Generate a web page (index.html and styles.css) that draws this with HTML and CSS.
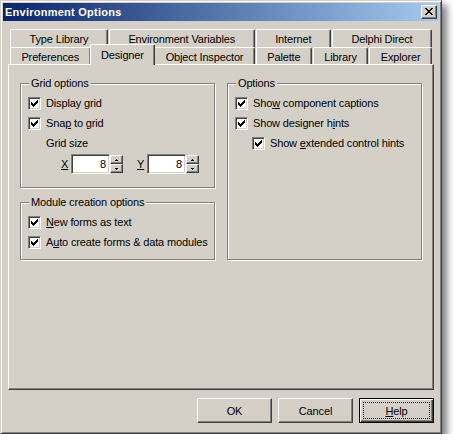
FILE: index.html
```html
<!DOCTYPE html>
<html>
<head>
<meta charset="utf-8">
<title>Environment Options</title>
<link rel="stylesheet" href="styles.css">
</head>
<body>
<div class="window">
  <div class="titlebar">
    <span class="title">Environment Options</span>
    <div class="close">
      <svg width="8" height="7" viewBox="0 0 8 7" shape-rendering="crispEdges"><path d="M0 0h2v1h-2zM6 0h2v1h-2zM1 1h2v1h-2zM5 1h2v1h-2zM2 2h4v1h-4zM3 3h2v1h-2zM2 4h4v1h-4zM1 5h2v1h-2zM5 5h2v1h-2zM0 6h2v1h-2zM6 6h2v1h-2z" fill="#000"/></svg>
    </div>
  </div>

  <div class="client">
    <div class="tabs">
      <div class="tab-row back">
        <div class="tab">Type Library</div>
        <div class="tab">Environment Variables</div>
        <div class="tab">Internet</div>
        <div class="tab">Delphi Direct</div>
      </div>
      <div class="tab-row front">
        <div class="tab">Preferences</div>
        <div class="tab selected">Designer</div>
        <div class="tab">Object Inspector</div>
        <div class="tab">Palette</div>
        <div class="tab">Library</div>
        <div class="tab">Explorer</div>
      </div>
    </div>

    <div class="page">
      <div class="column">
        <div class="group grid-group">
          <span class="group-label">Grid options</span>
          <div class="check-row">
            <span class="cb"><svg width="7" height="7" viewBox="0 0 7 7" shape-rendering="crispEdges"><path d="M6 0h1v1h-1zM5 1h2v1h-2zM0 2h1v1h-1zM4 2h3v1h-3zM0 3h2v1h-2zM3 3h3v1h-3zM0 4h5v1h-5zM1 5h3v1h-3zM2 6h1v1h-1z" fill="#000"/></svg></span>
            <span>Display <u>g</u>rid</span>
          </div>
          <div class="check-row">
            <span class="cb"><svg width="7" height="7" viewBox="0 0 7 7" shape-rendering="crispEdges"><path d="M6 0h1v1h-1zM5 1h2v1h-2zM0 2h1v1h-1zM4 2h3v1h-3zM0 3h2v1h-2zM3 3h3v1h-3zM0 4h5v1h-5zM1 5h3v1h-3zM2 6h1v1h-1z" fill="#000"/></svg></span>
            <span>Sna<u>p</u> to grid</span>
          </div>
          <div class="text-row">Grid size</div>
          <div class="spin-row">
            <div class="spin-field">
              <span class="axis"><u>X</u></span>
              <span class="edit">8</span>
              <span class="spin">
                <span class="spin-btn"><svg width="3" height="2" viewBox="0 0 3 2" shape-rendering="crispEdges"><path d="M1 0h1v1h-1zM0 1h3v1h-3z" fill="#000"/></svg></span>
                <span class="spin-btn"><svg width="3" height="2" viewBox="0 0 3 2" shape-rendering="crispEdges"><path d="M0 0h3v1h-3zM1 1h1v1h-1z" fill="#000"/></svg></span>
              </span>
            </div>
            <div class="spin-field">
              <span class="axis"><u>Y</u></span>
              <span class="edit">8</span>
              <span class="spin">
                <span class="spin-btn"><svg width="3" height="2" viewBox="0 0 3 2" shape-rendering="crispEdges"><path d="M1 0h1v1h-1zM0 1h3v1h-3z" fill="#000"/></svg></span>
                <span class="spin-btn"><svg width="3" height="2" viewBox="0 0 3 2" shape-rendering="crispEdges"><path d="M0 0h3v1h-3zM1 1h1v1h-1z" fill="#000"/></svg></span>
              </span>
            </div>
          </div>
        </div>

        <div class="group module-group">
          <span class="group-label">Module creation options</span>
          <div class="check-row">
            <span class="cb"><svg width="7" height="7" viewBox="0 0 7 7" shape-rendering="crispEdges"><path d="M6 0h1v1h-1zM5 1h2v1h-2zM0 2h1v1h-1zM4 2h3v1h-3zM0 3h2v1h-2zM3 3h3v1h-3zM0 4h5v1h-5zM1 5h3v1h-3zM2 6h1v1h-1z" fill="#000"/></svg></span>
            <span><u>N</u>ew forms as text</span>
          </div>
          <div class="check-row">
            <span class="cb"><svg width="7" height="7" viewBox="0 0 7 7" shape-rendering="crispEdges"><path d="M6 0h1v1h-1zM5 1h2v1h-2zM0 2h1v1h-1zM4 2h3v1h-3zM0 3h2v1h-2zM3 3h3v1h-3zM0 4h5v1h-5zM1 5h3v1h-3zM2 6h1v1h-1z" fill="#000"/></svg></span>
            <span>A<u>u</u>to create forms &amp; data modules</span>
          </div>
        </div>
      </div>

      <div class="column">
        <div class="group options-group">
          <span class="group-label">Options</span>
          <div class="check-row">
            <span class="cb"><svg width="7" height="7" viewBox="0 0 7 7" shape-rendering="crispEdges"><path d="M6 0h1v1h-1zM5 1h2v1h-2zM0 2h1v1h-1zM4 2h3v1h-3zM0 3h2v1h-2zM3 3h3v1h-3zM0 4h5v1h-5zM1 5h3v1h-3zM2 6h1v1h-1z" fill="#000"/></svg></span>
            <span>Sho<u>w</u> component captions</span>
          </div>
          <div class="check-row">
            <span class="cb"><svg width="7" height="7" viewBox="0 0 7 7" shape-rendering="crispEdges"><path d="M6 0h1v1h-1zM5 1h2v1h-2zM0 2h1v1h-1zM4 2h3v1h-3zM0 3h2v1h-2zM3 3h3v1h-3zM0 4h5v1h-5zM1 5h3v1h-3zM2 6h1v1h-1z" fill="#000"/></svg></span>
            <span>Show designer h<u>i</u>nts</span>
          </div>
          <div class="check-row indent">
            <span class="cb"><svg width="7" height="7" viewBox="0 0 7 7" shape-rendering="crispEdges"><path d="M6 0h1v1h-1zM5 1h2v1h-2zM0 2h1v1h-1zM4 2h3v1h-3zM0 3h2v1h-2zM3 3h3v1h-3zM0 4h5v1h-5zM1 5h3v1h-3zM2 6h1v1h-1z" fill="#000"/></svg></span>
            <span>Show <u>e</u>xtended control hints</span>
          </div>
        </div>
      </div>
    </div>

    <div class="buttons">
      <div class="btn"><span class="btn-face">OK</span></div>
      <div class="btn"><span class="btn-face">Cancel</span></div>
      <div class="btn default"><span class="btn-face focus"><u>H</u>elp</span></div>
    </div>
  </div>
</div>
</body>
</html>
```

FILE: styles.css
```css
* {
  box-sizing: border-box;
}

html,
body {
  margin: 0;
  padding: 0;
  background: #fff;
}

body {
  font-family: "Liberation Sans", Arial, sans-serif;
  font-size: 11px;
  line-height: 13px;
  color: #000;
  letter-spacing: -0.15px;
}

u {
  text-decoration: underline;
  text-underline-offset: 1px;
}

/* dialog frame */
.window {
  width: 442px;
  height: 434px;
  background: #d4d0c8;
  border: 1px solid;
  border-color: #d4d0c8 #404040 #404040 #d4d0c8;
  box-shadow: inset 1px 1px 0 #fff, inset -1px -1px 0 #808080, 5px 5px 7px rgba(0, 0, 0, 0.5);
  padding: 2px;
  display: flex;
  flex-direction: column;
}

.titlebar {
  height: 18px;
  flex: none;
  display: flex;
  align-items: center;
  padding: 0 2px;
  background: linear-gradient(to right, #0a246a, #a6caf0);
}

.title {
  color: #fff;
  font-weight: bold;
  letter-spacing: 0.25px;
}

.close {
  margin-left: auto;
  width: 16px;
  height: 14px;
  background: #d4d0c8;
  border: 1px solid;
  border-color: #fff #404040 #404040 #fff;
  box-shadow: inset -1px -1px 0 #808080;
  padding: 2px 0 0 3px;
}

.close svg {
  display: block;
}

.client {
  flex: 1;
  display: flex;
  flex-direction: column;
  padding: 8px 5px 8px 5px;
}

/* tab strip, two rows */
.tabs {
  flex: none;
  padding: 0 2px;
}

.tab-row {
  display: flex;
  gap: 1px;
}

.tab-row.back {
  height: 18px;
}

.tab-row.front {
  height: 17px;
  align-items: flex-end;
}

.tab {
  flex: 1 1 auto;
  height: 100%;
  padding: 3px 4px 0;
  text-align: center;
  white-space: nowrap;
  background: #d4d0c8;
  border-top: 1px solid #fff;
  border-left: 1px solid #fff;
  border-right: 1px solid #404040;
  border-radius: 2px 2px 0 0;
  box-shadow: inset -1px 0 0 #808080;
}

.tab.selected {
  position: relative;
  z-index: 1;
  height: 21px;
  margin: 0 -2px -1px;
  padding-top: 4px;
}

/* property page */
.page {
  flex: 1;
  display: flex;
  gap: 12px;
  padding: 18px 10px 0 11px;
  border: 1px solid;
  border-color: #fff #404040 #404040 #fff;
  box-shadow: inset -1px -1px 0 #808080;
}

.column {
  display: flex;
  flex-direction: column;
  align-self: flex-start;
  width: 195px;
}

.page .column:last-child {
  align-self: stretch;
  height: 177px;
}

.group {
  display: flex;
  flex-direction: column;
  border: 1px solid #808080;
  box-shadow: inset 1px 1px 0 #fff, 1px 1px 0 #fff;
  padding: 0 6px 0 7px;
}

.grid-group {
  height: 105px;
}

.module-group {
  margin-top: 14px;
  height: 58px;
}

.options-group {
  flex: 1;
}

.group-label {
  align-self: flex-start;
  margin: -7px 0 0 1px;
  padding: 0 2px;
  background: #d4d0c8;
  white-space: nowrap;
}

.check-row {
  display: flex;
  align-items: center;
  gap: 5px;
  height: 13px;
  margin-top: 7px;
  white-space: nowrap;
}

.check-row.indent {
  margin-left: 17px;
}

.cb {
  flex: none;
  width: 13px;
  height: 13px;
  padding: 2px;
  background: #fff;
  border: 1px solid;
  border-color: #808080 #fff #fff #808080;
  box-shadow: inset 1px 1px 0 #404040, inset -1px -1px 0 #d4d0c8;
}

.cb svg {
  display: block;
}

.text-row {
  height: 13px;
  margin-top: 7px;
  padding-left: 18px;
}

.spin-row {
  display: flex;
  gap: 14px;
  margin-top: 4px;
  padding-left: 33px;
}

.spin-field {
  display: flex;
  align-items: center;
}

.axis {
  width: 10px;
}

.edit {
  width: 39px;
  height: 20px;
  padding: 3px 3px 0 0;
  text-align: right;
  background: #fff;
  border: 1px solid;
  border-color: #808080 #fff #fff #808080;
  box-shadow: inset 1px 1px 0 #404040, inset -1px -1px 0 #d4d0c8;
}

.spin {
  display: flex;
  flex-direction: column;
  width: 13px;
  height: 20px;
  padding: 1px 0;
}

.spin-btn {
  flex: 1;
  display: flex;
  align-items: center;
  justify-content: center;
  background: #d4d0c8;
  border: 1px solid;
  border-color: #fff #404040 #404040 #fff;
  box-shadow: inset -1px -1px 0 #808080;
}

.spin-btn svg {
  display: block;
}

/* dialog buttons */
.buttons {
  flex: none;
  display: flex;
  justify-content: flex-end;
  gap: 6px;
  margin-top: 8px;
}

.btn {
  width: 75px;
  height: 25px;
  display: flex;
  background: #d4d0c8;
  border: 1px solid;
  border-color: #fff #404040 #404040 #fff;
  box-shadow: inset -1px -1px 0 #808080;
}

.btn.default {
  border-color: #000;
  box-shadow: inset 1px 1px 0 #fff, inset -1px -1px 0 #404040, inset -2px -2px 0 #808080;
}

.btn-face {
  flex: 1;
  display: flex;
  align-items: center;
  justify-content: center;
  padding-top: 1px;
}

.btn-face.focus {
  margin: 3px;
  border: 1px dotted #000;
}
```
